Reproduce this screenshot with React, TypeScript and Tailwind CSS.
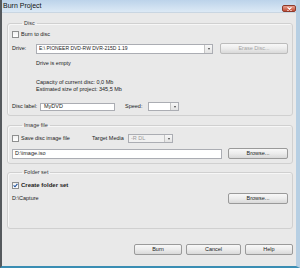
import React from "react";

function Check({ checked = false }: { checked?: boolean }) {
  return (
    <span className="w-[7px] h-[7px] border border-[#8e8f8f] bg-gradient-to-b from-[#f1f1f1] to-[#ffffff] flex items-center justify-center shrink-0">
      {checked && (
        <svg width="5" height="5" viewBox="0 0 5 5">
          <path d="M0.6 2.4 L2 3.8 L4.4 0.8" fill="none" stroke="#1c4f9c" strokeWidth="1.1" />
        </svg>
      )}
    </span>
  );
}

function Combo({
  text,
  className,
  disabled = false,
}: {
  text?: string;
  className: string;
  disabled?: boolean;
}) {
  return (
    <div
      className={
        "flex items-center border border-[#abadb3] pl-[2px] " +
        (disabled ? "bg-[#f0f0f0] text-[#9a9a9a] " : "bg-white text-[#222] ") +
        className
      }
    >
      <span className="flex-1 whitespace-nowrap overflow-hidden">{text}</span>
      <span className="w-[8px] h-full border-l border-[#c5c5c5] bg-gradient-to-b from-[#f7f7f7] to-[#e3e3e3] flex items-center justify-center">
        <span className="border-x-[1.5px] border-t-[2px] border-x-transparent border-t-[#444]" />
      </span>
    </div>
  );
}

function Btn({
  label,
  className,
  disabled = false,
}: {
  label: string;
  className: string;
  disabled?: boolean;
}) {
  return (
    <div
      className={
        "flex items-center justify-center rounded-[2px] border border-[#9a9a9a] bg-gradient-to-b from-[#f8f8f8] via-[#ececec] to-[#d9d9d9] " +
        (disabled ? "text-[#a4a4a4] border-[#bcbcbc] " : "text-[#222] ") +
        className
      }
    >
      {label}
    </div>
  );
}

function Group({
  title,
  className,
  children,
}: {
  title: string;
  className: string;
  children: React.ReactNode;
}) {
  return (
    <fieldset
      className={
        "border border-[#d0d0d0] rounded-[3px] pl-[4px] pr-[4px] shadow-[inset_1px_1px_0_#f7f7f7] " +
        className
      }
    >
      <legend className="ml-[10px] px-[2px] leading-[6px] text-[#333]">{title}</legend>
      {children}
    </fieldset>
  );
}

export default function App() {
  return (
    <div className="w-[300px] h-[268px] flex flex-col bg-[#e9e9e9] border-l-2 border-l-[#55595d] border-r-4 border-r-[#b7cfe3] border-b-2 border-b-[#3a8db3] font-['Liberation_Sans',Arial,sans-serif] text-[5.5px] text-[#222] overflow-hidden">
      <div className="h-[13px] shrink-0 flex justify-between bg-gradient-to-b from-[#bcd3ea] to-[#dce9f5] border-b border-b-[#c9d6e2]">
        <span className="pl-[1px] text-[7px] leading-[12px] text-[#111]">Burn Project</span>
        <span className="mt-[5px] w-[14px] h-[7px] rounded-[2px] border border-[#8c3b2c] bg-gradient-to-b from-[#e7a192] to-[#c24a33] flex items-center justify-center">
          <svg width="5" height="4" viewBox="0 0 5 4">
            <path d="M0.5 0.3 L4.5 3.7 M4.5 0.3 L0.5 3.7" stroke="#fff" strokeWidth="1.1" />
          </svg>
        </span>
      </div>

      <div className="flex flex-col pl-[5px] pr-[3px]">
        <Group title="Disc" className="mt-[7px] h-[96px]">
          <div className="mt-[5px] h-[7px] flex items-center gap-[2px]">
            <Check />
            <span>Burn to disc</span>
          </div>
          <div className="mt-[5px] h-[11px] flex items-center">
            <span className="w-[24px]">Drive:</span>
            <Combo text="E:\ PIONEER DVD-RW  DVR-215D 1.19" className="w-[177px] h-[10px] text-[5px]" />
            <Btn label="Erase Disc..." disabled className="ml-[7px] w-[68px] h-[11px]" />
          </div>
          <div className="mt-[6px] pl-[24px] leading-[6px]">Drive is empty</div>
          <div className="mt-[13px] pl-[24px] leading-[7px]">
            <div>Capacity of current disc: 0,0 Mb</div>
            <div>Estimated size of project: 345,5 Mb</div>
          </div>
          <div className="mt-[9px] h-[9px] flex items-center">
            <span className="w-[28px]">Disc label:</span>
            <div className="w-[75px] h-[8px] bg-white border border-[#abadb3] pl-[3px] flex items-center">MyDVD</div>
            <span className="ml-[10px] w-[23px]">Speed:</span>
            <Combo className="w-[31px] h-[9px]" />
          </div>
        </Group>

        <Group title="Image file" className="mt-[6px] h-[42px]">
          <div className="mt-[6px] h-[9px] flex items-center">
            <Check />
            <span className="ml-[2px] w-[71px]">Save disc image file</span>
            <span className="w-[36px]">Target Media</span>
            <Combo text="-R DL" disabled className="w-[45px] h-[9px]" />
          </div>
          <div className="mt-[5px] h-[11px] flex items-center">
            <div className="w-[210px] h-[10px] bg-white border border-[#abadb3] pl-[2px] flex items-center">D:\image.iso</div>
            <Btn label="Browse..." className="ml-[6px] w-[60px] h-[11px]" />
          </div>
        </Group>

        <Group title="Folder set" className="mt-[5px] h-[60px]">
          <div className="mt-[6px] h-[8px] flex items-center gap-[2px]">
            <Check checked />
            <span className="font-bold text-[6px]">Create folder set</span>
          </div>
          <div className="mt-[4px] h-[11px] flex items-center">
            <span className="w-[216px]">D:\Capture</span>
            <Btn label="Browse..." className="w-[60px] h-[11px]" />
          </div>
        </Group>

        <div className="mt-[15px] flex justify-end gap-[4px]">
          <Btn label="Burn" className="w-[48px] h-[11px]" />
          <Btn label="Cancel" className="w-[55px] h-[11px]" />
          <Btn label="Help" className="w-[48px] h-[11px]" />
        </div>
      </div>
    </div>
  );
}
